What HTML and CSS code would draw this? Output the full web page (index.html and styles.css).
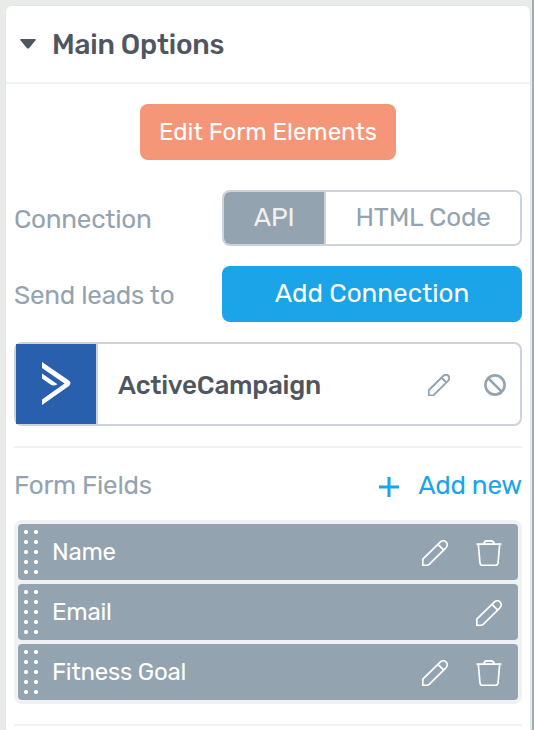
FILE: index.html
```html
<!DOCTYPE html>
<html lang="en">
<head>
  <meta charset="UTF-8">
  <meta name="viewport" content="width=device-width, initial-scale=1.0">
  <title>Main Options</title>
  <link rel="stylesheet" href="styles.css">
</head>
<body>
  <svg class="sprite" aria-hidden="true">
    <symbol id="pencil" viewBox="0 0 26 26">
      <path d="M.8 25.2V19.2L18.2 2.1Q21.4-.7 24 2T23.9 7.8L7.2 24.4Q6.2 25.3 4.6 25.3ZM16 4.4L21.7 10.1"/>
    </symbol>
    <symbol id="trash" viewBox="0 0 26 26">
      <path d="M.5 4.2H25.5M2.3 4.2L4 23.2Q4.2 25.3 6.3 25.3H19.7Q21.8 25.3 22 23.2L23.7 4.2M8 4.2Q8 .8 11 .8H15Q18 .8 18 4.2"/>
    </symbol>
  </svg>

  <div class="panel">
    <div class="header">
      <svg class="caret" viewBox="0 0 16 10"><path d="M1 0H15Q16.3.3 15.4 1.4L9.2 9Q8 10.2 6.8 9L.6 1.4Q-.3.3 1 0Z"/></svg>
      <h2>Main Options</h2>
    </div>

    <div class="content">
      <button class="btn btn-edit">Edit Form Elements</button>

      <div class="row">
        <label>Connection</label>
        <div class="toggle">
          <button class="active">API</button>
          <button>HTML Code</button>
        </div>
      </div>

      <div class="row">
        <label>Send leads to</label>
        <button class="btn btn-add">Add Connection</button>
      </div>

      <div class="connection">
        <div class="logo">
          <svg viewBox="0 0 30 44"><path d="M0 0L27 18.5Q30 21.2 27 24L0 43V37.6L22.5 21.5L0 6ZM0 11.5L15.5 22.2Q11.5 24.6 8.5 22.4L0 16.5Z"/></svg>
        </div>
        <div class="name">ActiveCampaign</div>
        <svg class="icon icon-small"><use href="#pencil"/></svg>
        <svg class="icon icon-ban" viewBox="0 0 22 22"><circle cx="11" cy="11" r="9.6"/><path d="M4.2 4.2L17.8 17.8"/></svg>
      </div>

      <div class="fields-head">
        <label>Form Fields</label>
        <a class="add-new">
          <svg viewBox="0 0 20 20"><path d="M10 0V20M0 10H20"/></svg>
          Add new
        </a>
      </div>

      <div class="fields">
        <div class="field">
          <div class="grip"></div>
          <div class="field-name">Name</div>
          <svg class="icon"><use href="#pencil"/></svg>
          <svg class="icon"><use href="#trash"/></svg>
        </div>
        <div class="field">
          <div class="grip"></div>
          <div class="field-name">Email</div>
          <svg class="icon"><use href="#pencil"/></svg>
        </div>
        <div class="field">
          <div class="grip"></div>
          <div class="field-name">Fitness Goal</div>
          <svg class="icon"><use href="#pencil"/></svg>
          <svg class="icon"><use href="#trash"/></svg>
        </div>
      </div>

      <div class="divider"></div>
    </div>
  </div>
</body>
</html>
```

FILE: styles.css
```css
* {
  box-sizing: border-box;
}

body {
  margin: 0;
  height: 730px;
  overflow: hidden;
  padding: 5px 0 0 5px;
  font-family: Rubik, Roboto, sans-serif;
  font-size: 26px;
  letter-spacing: -0.22px;
  background: #e8ebe8;
  border-right: 2px solid #a5abad;
}

.sprite {
  display: none;
}

.panel {
  width: 526px;
  height: 740px;
  background: #fff;
  border: 1px solid #dce8e8;
  border-radius: 7px;
}

.header {
  display: flex;
  align-items: center;
  height: 78px;
  padding-left: 14px;
  border-bottom: 2px solid #f0f2f2;
}

.header h2 {
  margin: 0 0 0 16px;
  font-size: 28px;
  font-weight: 500;
  color: #50565f;
}

.caret {
  width: 16px;
  height: 10px;
  fill: #50565f;
}

.content {
  padding: 20px 8px 0;
}

button {
  font-family: inherit;
  font-size: 26px;
  border: none;
  padding: 0;
  cursor: pointer;
}

.btn {
  display: block;
  height: 56px;
  border-radius: 8px;
  color: #fff;
}

.btn-edit {
  width: 256px;
  margin: 0 auto 30px;
  font-size: 24px;
  background: #f59678;
}

.btn-add {
  width: 300px;
  padding-bottom: 2px;
  background: #1ba4e8;
}

.row {
  display: flex;
  justify-content: space-between;
  align-items: center;
  height: 56px;
  margin-bottom: 20px;
}

label {
  padding-top: 2px;
  color: #94a3b0;
}

.toggle {
  display: flex;
  width: 300px;
  height: 56px;
  border: 2px solid #cdd3da;
  border-radius: 8px;
  overflow: hidden;
}

.toggle button {
  flex: 1;
  padding-bottom: 2px;
  letter-spacing: -0.2px;
  background: #fff;
  color: #94a3b0;
}

.toggle .active {
  flex: 0 0 102px;
  background: #94a3b0;
  color: #f0f2f2;
  border-right: 2px solid #cdd3da;
}

.connection {
  display: flex;
  align-items: center;
  height: 84px;
  padding-right: 14px;
  border: 2px solid #cdd3da;
  border-radius: 8px;
}

.logo {
  display: flex;
  align-items: center;
  width: 82px;
  height: 80px;
  padding-left: 26px;
  background: #2860ae;
  border-right: 2px solid #cdd3da;
}

.logo svg {
  width: 30px;
  height: 44px;
  fill: #fff;
}

.name {
  flex: 1;
  padding: 2px 0 0 20px;
  font-weight: 500;
  color: #50565f;
}

.icon {
  width: 26px;
  height: 26px;
  fill: none;
  stroke: #fff;
  stroke-width: 1.7;
  stroke-linejoin: round;
}

.icon-small {
  width: 22px;
  height: 22px;
  margin-top: 2px;
  stroke: #94a3b0;
  stroke-width: 2.4;
  overflow: visible;
}

.icon-ban {
  width: 22px;
  height: 22px;
  margin: 2px 0 0 34px;
  stroke: #94a3b0;
  stroke-width: 2.6;
}

.fields-head {
  display: flex;
  justify-content: space-between;
  align-items: center;
  height: 74px;
  margin-top: 20px;
  border-top: 2px solid #f0f2f2;
}

.add-new {
  display: flex;
  align-items: center;
  gap: 19px;
  padding-top: 2px;
  color: #1ba4e8;
}

.add-new svg {
  width: 20px;
  height: 20px;
  margin-top: 3px;
  stroke: currentColor;
  stroke-width: 3;
}

.fields {
  display: flex;
  flex-direction: column;
  gap: 4px;
  padding: 4px;
  background: #f0f2f2;
  border-radius: 8px;
}

.field {
  display: flex;
  align-items: center;
  height: 56px;
  padding: 0 16px 0 5px;
  font-size: 24px;
  color: #fff;
  background: #94a3b0;
  border-radius: 4px;
}

.field .icon {
  margin: 2px 0 0 28px;
}

/* 2 x 5 drag dots */
.grip {
  width: 20px;
  height: 50px;
  background: radial-gradient(circle, #fff 1.7px, transparent 2.4px) -2px 0 / 10px 10px;
}

.field-name {
  flex: 1;
  padding-left: 9px;
}

.divider {
  height: 2px;
  margin-top: 20px;
  background: #f0f2f2;
}
```
